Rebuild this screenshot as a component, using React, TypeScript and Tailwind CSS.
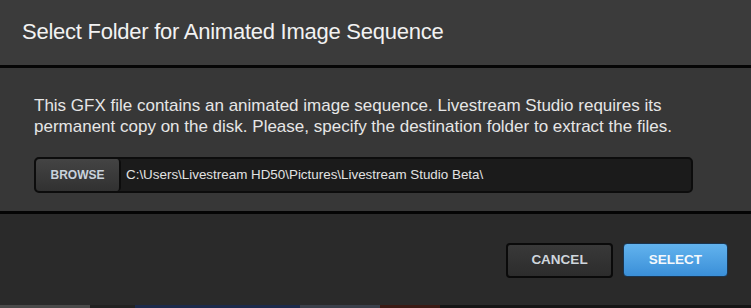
import React from "react";

export default function App() {
  const font = { fontFamily: '"Liberation Sans", Arial, sans-serif' };
  return (
    <div className="w-[751px] h-[308px] flex flex-col bg-[#2a2a2a] overflow-hidden" style={font}>
      <div className="h-[65px] shrink-0 bg-[#3b3b3b] flex items-center pl-[22px] pb-[3px]">
        <span className="text-[22px] text-[#f2f2f2] tracking-[-0.25px]">Select Folder for Animated Image Sequence</span>
      </div>
      <div className="h-[3px] shrink-0 bg-[#050505]" />
      <div className="h-[143px] shrink-0 bg-[#373737] pl-[34px] pt-[27px] flex flex-col">
        <p className="text-[17px] leading-[21px] text-[#e6e6e6]">
          This GFX file contains an animated image sequence. Livestream Studio requires its
          <br />
          permanent copy on the disk. Please, specify the destination folder to extract the files.
        </p>
        <div className="mt-[20px] w-[659px] h-[36px] rounded-[5px] bg-[#1b1b1b] border-[2px] border-[#0c0c0c] flex items-stretch">
          <div className="w-[85px] rounded-[4px] bg-gradient-to-b from-[#444444] to-[#313131] border-r-[2px] border-[#0c0c0c] flex items-center justify-center">
            <span className="text-[12px] font-bold text-[#c9d2dc]">BROWSE</span>
          </div>
          <div className="flex items-center pl-[5px]">
            <span className="text-[13.4px] text-[#e2e2e2]">C:\Users\Livestream HD50\Pictures\Livestream Studio Beta\</span>
          </div>
        </div>
      </div>
      <div className="h-[3px] shrink-0 bg-[#050505]" />
      <div className="flex-1 bg-[#2a2a2a] flex justify-end items-start pt-[29px] pr-[23px] gap-[10px]">
        <div className="w-[107px] h-[35px] rounded-[4px] border-[2px] border-[#0a0a0a] bg-gradient-to-b from-[#393939] to-[#2c2c2c] flex items-center justify-center">
          <span className="text-[13.5px] font-bold text-[#cfd6dd]">CANCEL</span>
        </div>
        <div className="w-[105px] h-[34px] rounded-[4px] border-[1px] border-[#1a3550] bg-gradient-to-b from-[#62b3ee] to-[#3a8fd8] flex items-center justify-center">
          <span className="text-[13.5px] font-bold text-[#f4f8fc]">SELECT</span>
        </div>
      </div>
      <div className="h-[3px] shrink-0 flex">
        <div className="w-[90px] bg-[#4a4a4a]" />
        <div className="w-[45px] bg-[#222]" />
        <div className="w-[165px] bg-[#1c2a4a]" />
        <div className="w-[80px] bg-[#3a3f4a]" />
        <div className="w-[60px] bg-[#3a1a14]" />
        <div className="flex-1 bg-[#151515]" />
      </div>
    </div>
  );
}
